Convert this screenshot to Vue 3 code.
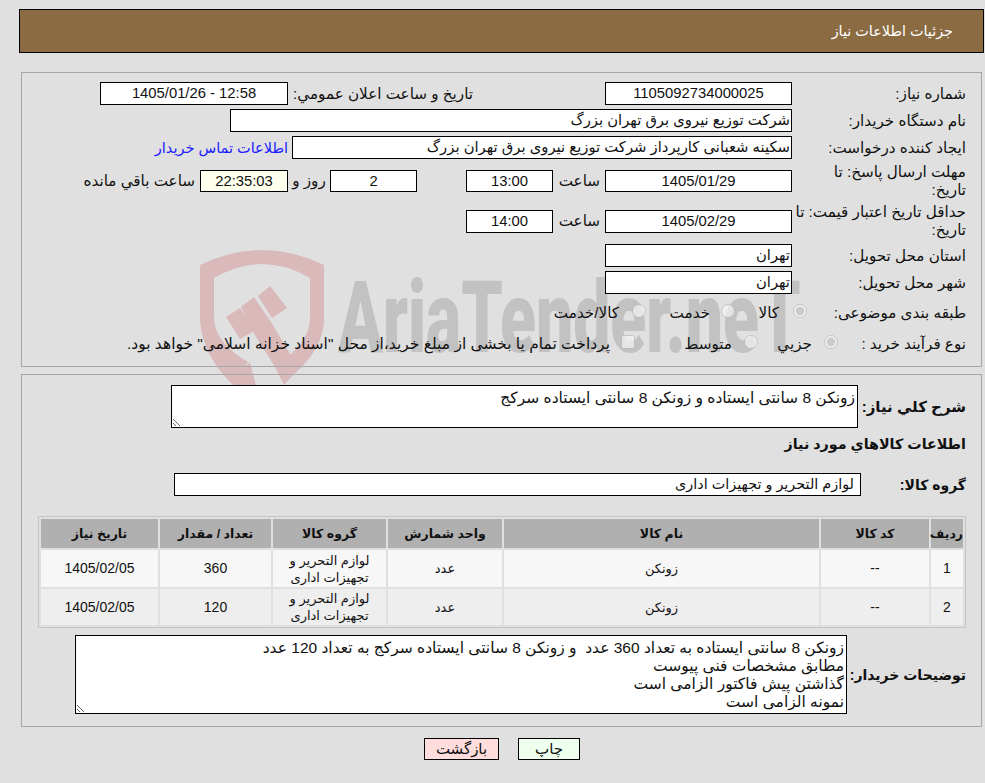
<script setup>
const columns = [
  { title: 'ردیف', width: 32 },
  { title: 'کد کالا', width: 108 },
  { title: 'نام کالا', width: 315 },
  { title: 'واحد شمارش', width: 114 },
  { title: 'گروه کالا', width: 113 },
  { title: 'تعداد / مقدار', width: 111 },
  { title: 'تاریخ نیاز', width: 117 },
]
const rows = [
  { id: 1, qty: 360 },
  { id: 2, qty: 120 },
]
const notes = 'زونکن 8 سانتی ایستاده به تعداد 360 عدد  و زونکن 8 سانتی ایستاده سرکج به تعداد 120 عدد\nمطابق مشخصات فنی پیوست\nگذاشتن پیش فاکتور الزامی است\nنمونه الزامی است'
</script>

<template>
  <div class="page" dir="rtl">
    <div class="watermark" aria-hidden="true">
      <svg class="shield" viewBox="0 0 130 145" width="130" height="145">
        <path d="M0 15 Q62 -15 124 15 L124 72 Q122 100 93 125 L84 110 Q110 90 110 68 L110 28 Q62 0 14 28 L14 68 Q14 92 48 112 L33 135 Q2 105 0 70 Z" fill="#d9b9ba" />
        <path d="M26 67 L40 58 L54 81 L40 89 Z M41 57 L54 47 L71 72 L95 112 L93 125 L84 135 L75 117 L53 82 Z M58 46 L70 36 L87 58 L72 68 Z M31 132 L50 112 L57 140 L40 140 Z" fill="#d9b9ba" />
      </svg>
      <span class="brand">AriaTender.neT</span>
    </div>

    <header class="title-bar">جزئیات اطلاعات نیاز</header>

    <section class="panel top-panel">
      <div class="row">
        <div class="label">شماره نیاز:</div>
        <div class="field date center num">1105092734000025</div>
        <div class="announce-label">تاریخ و ساعت اعلان عمومي:</div>
        <div class="field announce center num" dir="ltr">1405/01/26 - 12:58</div>
      </div>
      <div class="row">
        <div class="label">نام دستگاه خریدار:</div>
        <div class="field buyer">شرکت توزیع نیروی برق تهران بزرگ</div>
      </div>
      <div class="row">
        <div class="label">ایجاد کننده درخواست:</div>
        <div class="field creator">سکینه شعبانی کارپرداز شرکت توزیع نیروی برق تهران بزرگ</div>
        <a class="contact">اطلاعات تماس خریدار</a>
      </div>
      <div class="row tall">
        <div class="label">مهلت ارسال پاسخ: تا<br />تاریخ:</div>
        <div class="field date center num">1405/01/29</div>
        <div class="hour-label">ساعت</div>
        <div class="field small center num">13:00</div>
        <div class="field small center num days">2</div>
        <div class="day-label">روز و</div>
        <div class="field timer center num">22:35:03</div>
        <div class="remain-label">ساعت باقي مانده</div>
      </div>
      <div class="row tall second">
        <div class="label">حداقل تاریخ اعتبار قیمت: تا<br />تاریخ:</div>
        <div class="field date center num">1405/02/29</div>
        <div class="hour-label">ساعت</div>
        <div class="field small center num">14:00</div>
      </div>
      <div class="row">
        <div class="label">استان محل تحویل:</div>
        <div class="field date">تهران</div>
      </div>
      <div class="row">
        <div class="label">شهر محل تحویل:</div>
        <div class="field date">تهران</div>
      </div>
      <div class="row options subject">
        <div class="label">طبقه بندی موضوعی:</div>
        <input class="radio r1" type="radio" disabled checked />
        <span class="opt o1">کالا</span>
        <input class="radio" type="radio" disabled />
        <span class="opt o2">خدمت</span>
        <input class="radio" type="radio" disabled />
        <span class="opt o3">کالا/خدمت</span>
      </div>
      <div class="row options process">
        <div class="label">نوع فرآیند خرید :</div>
        <input class="radio r4" type="radio" disabled checked />
        <span class="opt o4">جزیي</span>
        <input class="radio" type="radio" disabled />
        <span class="opt o5">متوسط</span>
        <input class="check" type="checkbox" disabled />
        <span class="opt o6">پرداخت تمام یا بخشی از مبلغ خرید،از محل "اسناد خزانه اسلامی" خواهد بود.</span>
      </div>
    </section>

    <section class="panel bottom-panel">
      <div class="row desc-row">
        <div class="strong-label desc-label">شرح کلي نیاز:</div>
        <textarea class="area desc" readonly>زونکن 8 سانتی ایستاده و زونکن 8 سانتی ایستاده سرکج</textarea>
      </div>
      <h2 class="heading">اطلاعات کالاهاي مورد نیاز</h2>
      <div class="row group-row">
        <div class="strong-label group-label">گروه کالا:</div>
        <div class="field group">لوازم التحریر و تجهیزات اداری</div>
      </div>
      <table class="items">
        <thead>
          <tr>
            <th v-for="c in columns" :key="c.title" :style="{ width: c.width + 'px' }">{{ c.title }}</th>
          </tr>
        </thead>
        <tbody>
          <tr v-for="r in rows" :key="r.id">
            <td class="num">{{ r.id }}</td>
            <td class="num">--</td>
            <td>زونکن</td>
            <td>عدد</td>
            <td>لوازم التحریر و<br />تجهیزات اداری</td>
            <td class="num">{{ r.qty }}</td>
            <td class="num">1405/02/05</td>
          </tr>
        </tbody>
      </table>
      <div class="row notes-row">
        <div class="strong-label notes-label">توضیحات خریدار:</div>
        <textarea class="area notes" readonly :value="notes"></textarea>
      </div>
    </section>

    <div class="actions">
      <button class="btn print" type="button">چاپ</button>
      <button class="btn back" type="button">بازگشت</button>
    </div>
  </div>
</template>

<style>
html, body { margin: 0; background: #e0e0e0; }
</style>

<style scoped>
.page {
  position: relative;
  width: 985px;
  height: 783px;
  overflow: hidden;
  padding-top: 9px;
  box-sizing: border-box;
  background: #e0e0e0;
  color: #111;
  font-family: "Liberation Sans", "DejaVu Sans", sans-serif;
  font-size: 15.2px;
}
.watermark {
  position: absolute;
  left: 200px;
  top: 250px;
  width: 600px;
  height: 145px;
}
.shield { position: absolute; left: 0; top: 0; }
.brand {
  position: absolute;
  left: 138px;
  top: 12px;
  direction: ltr;
  font-family: Roboto, sans-serif;
  font-weight: 900;
  font-size: 100px;
  line-height: 112px;
  color: #c2c2c2;
  transform: scaleX(0.66);
  transform-origin: left center;
  white-space: nowrap;
}
.title-bar {
  position: relative;
  margin-right: 1px;
  margin-left: 19px;
  height: 42px;
  line-height: 42px;
  padding-right: 30px;
  background: #8b6b42;
  border: 1px solid #000;
  color: #fff;
  font-size: 14.4px;
}
.panel {
  position: relative;
  width: 961px;
  margin-right: 3px;
  border: 1px solid #a6a6a6;
  box-sizing: border-box;
  padding-right: 15px;
}
.top-panel { margin-top: 19px; height: 295px; padding-top: 9px; }
.bottom-panel { margin-top: 7px; height: 353px; padding-top: 10px; }
.row { display: flex; align-items: center; min-height: 23px; margin-bottom: 4px; }
.label { width: 174px; flex: none; box-sizing: border-box; line-height: 18px; }
.field {
  box-sizing: border-box;
  height: 23px;
  line-height: 20px;
  background: #fff;
  border: 1px solid #000;
  padding: 0 1px;
  font-size: 14.8px;
  white-space: nowrap;
  overflow: hidden;
  flex: none;
}
.center { text-align: center; }
.date { width: 187px; }
.announce-label { width: 185px; margin-right: 132px; flex: none; white-space: nowrap; }
.announce { width: 188px; }
.buyer { width: 562px; }
.creator { width: 500px; }
.contact { margin-right: 4px; color: #1a1aff; font-size: 14.5px; }
.tall { height: 32px; margin-top: 6px; margin-bottom: 8px; }
.tall .field { height: 22px; }
.second { margin-top: 8px; margin-bottom: 7px; }
.second .field { height: 23px; }
.hour-label { width: 52px; flex: none; padding-right: 5px; box-sizing: border-box; }
.small { width: 87px; }
.days { margin-right: 49px; }
.day-label { width: 42px; flex: none; text-align: center; }
.timer { width: 88px; background: #ffffee; }
.remain-label { margin-right: 5px; white-space: nowrap; }
.options { margin-bottom: 0; height: 30px; }
.options .label, .opt { padding-top: 3px; }
.subject { margin-top: -2px; }
.process { margin-top: 1px; }
.radio, .check { margin: 0; flex: none; width: 14px; height: 14px; }
.opt { white-space: nowrap; box-sizing: border-box; flex: none; }
.r1 { margin-right: -15px; }
.o1 { margin-right: 14px; width: 44px; }
.o2 { margin-right: 11px; width: 64px; }
.o3 { margin-right: 13px; }
.r4 { margin-right: -46px; }
.o4 { margin-right: 12px; width: 54px; }
.o5 { margin-right: 12px; width: 97px; }
.o6 { margin-right: 11px; font-size: 15.5px; }
.strong-label { font-weight: 700; font-size: 15px; white-space: nowrap; }
.desc-row { margin-bottom: 0; }
.desc-label { width: 108px; flex: none; }
.area {
  display: block;
  box-sizing: border-box;
  background: #fff;
  border: 1px solid #000;
  border-radius: 0;
  margin: 0;
  padding: 3px 2px;
  outline: none;
  color: #111;
  font-family: inherit;
  font-size: 15.5px;
  line-height: 18px;
  flex: none;
}
.desc { width: 687px; height: 43px; }
.heading { margin: 6px 0 19px; font-size: 14.3px; line-height: 20px; font-weight: 700; }
.group-row { margin-bottom: 20px; }
.group-label { width: 105px; flex: none; font-size: 14px; }
.group { width: 687px; padding-right: 6px; font-size: 14.4px; }
.items {
  width: 928px;
  table-layout: fixed;
  border-collapse: separate;
  border-spacing: 2px;
  border: 1px solid #c4c4c4;
  font-size: 13px;
  text-align: center;
}
.items th { height: 29px; padding: 0; background: #b0b0b0; font-size: 12.5px; }
.items td { height: 36px; padding: 0; line-height: 17px; background: #f7f7f7; }
.items tr:first-child td { height: 37px; }
.items tr:nth-child(2) td { background: #eeeeee; }
.items td.num { font-size: 14px; }
.notes-row { margin-top: 7px; }
.notes-label { width: 119px; flex: none; font-size: 14px; }
.notes { width: 772px; height: 79px; }
.actions { display: flex; justify-content: center; gap: 19px; margin-top: 11px; padding-left: 19px; }
.btn {
  box-sizing: border-box;
  height: 22px;
  border: 1px solid #000;
  padding: 0;
  color: #111;
  font-family: inherit;
  font-size: 15px;
  line-height: 18px;
}
.print { width: 62px; background: #eeffee; }
.back { width: 75px; background: #ffdddd; }
</style>
